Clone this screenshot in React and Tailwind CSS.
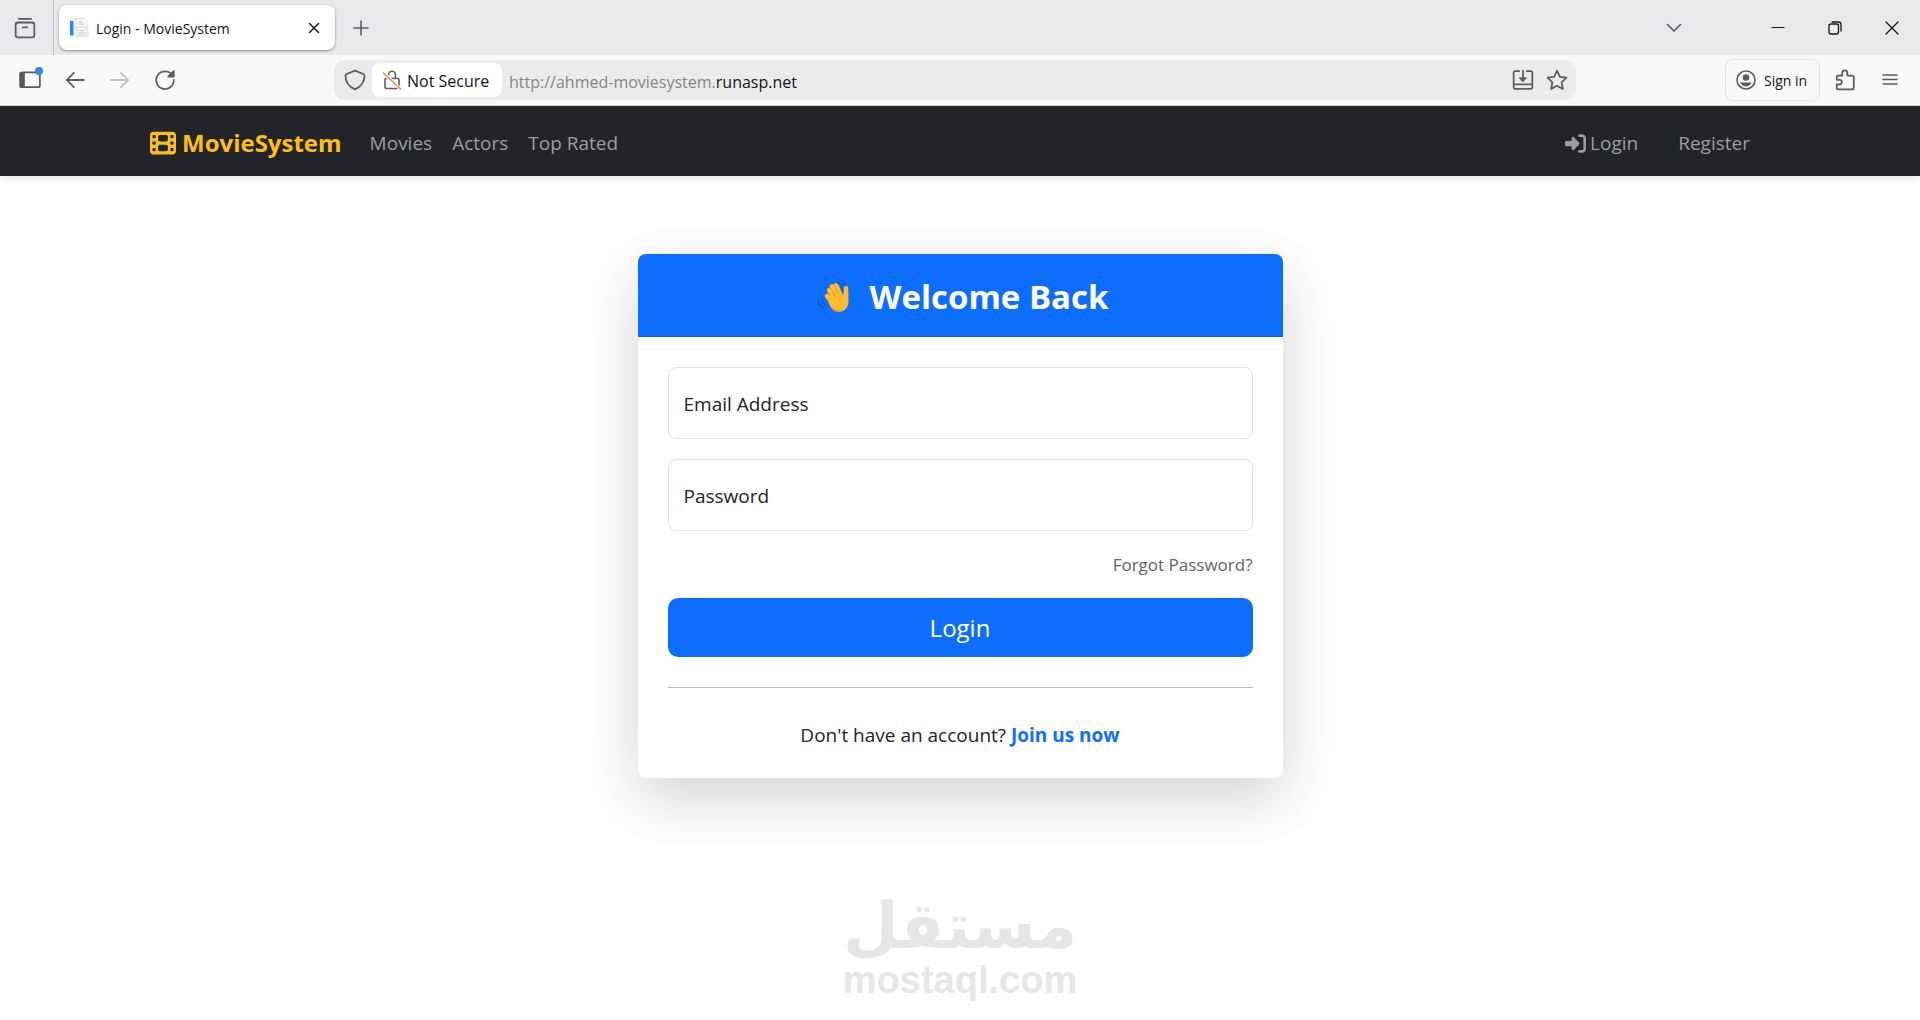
import React, { useState } from 'react';
import { FaFilm, FaRightToBracket } from 'react-icons/fa6';

const navLinks = ['Movies', 'Actors', 'Top Rated'];

const Icon = ({ size = 20, className = '', children }) => (
  <svg
    width={size}
    height={size}
    viewBox="0 0 20 20"
    fill="none"
    stroke="currentColor"
    strokeWidth="1.6"
    strokeLinecap="round"
    strokeLinejoin="round"
    aria-hidden="true"
    className={`shrink-0 ${className}`}
  >
    {children}
  </svg>
);

const IconButton = ({ label, className = '', children }) => (
  <button type="button" aria-label={label} className={`flex items-center justify-center ${className}`}>
    {children}
  </button>
);

const Favicon = () => (
  <svg width="20" height="20" viewBox="0 0 20 20" aria-hidden="true" className="shrink-0">
    <path d="M1 1h10v17H1z" fill="#f3f4f6" stroke="#d4d6da" strokeWidth=".6" />
    <path d="M1 3h3.500v14.500H1z" fill="#2f8be6" />
    <path d="M7 .5h8l3 3V10H7z" fill="#fafafa" stroke="#cfd1d5" strokeWidth=".7" />
    <path d="M8 9h8l3 3v7H8z" fill="#f5f5f6" stroke="#cfd1d5" strokeWidth=".7" />
    <path d="M9 4h5M9 6h7M10 12.500h5M10 15h7M10 17h7" stroke="#c3c5ca" strokeWidth=".8" />
  </svg>
);

const WavingHand = () => (
  <svg width="38" height="38" viewBox="0 0 36 36" role="img" aria-label="Waving hand" className="shrink-0">
    <g fill="none" strokeLinecap="round" strokeLinejoin="round">
      <g stroke="#f3a531" strokeWidth="4.600">
        <path d="M18 20l-5.500-8.500" />
        <path d="M20 17l-5-9" />
        <path d="M23 16l-4-9" />
        <path d="M15 23l-4.500-6" />
      </g>
      <g stroke="#fdc02f" strokeWidth="3.400">
        <path d="M18 20l-5.300-8.300" />
        <path d="M20.500 17l-5-8.800" />
        <path d="M23.500 16l-4.200-8.500" />
        <path d="M15.500 23l-4.500-5.700" />
      </g>
    </g>
    <path
      d="M12 19c3-5 9-7 12.500-3l1.500-1.500c.8-1.500.1-4 .3-5.500.3-2.200 3.700-2.200 4.100.2.500 3.500.2 8 .4 11.300.4 6.500-3 11-8 11.500-4.800.5-8.300-3-10.800-8z"
      fill="#fcbc2e"
    />
    <path d="M13 26c3 4 8 6 13 3.500-1.500 2-4 3-6.500 2.500-3-.7-5-3-6.500-6z" fill="#ee8f3e" />
    <path d="M25.500 15.500c-2 1-3.300 3-3.200 5M16 13.500l2.800 4.300M18.600 10.500l2.400 4.700" fill="none" stroke="#ee9b2c" strokeLinecap="round" />
    <g fill="none" stroke="#1550a8" strokeWidth="1" strokeLinecap="round">
      <path d="M20.500 4.500c2.300.3 3.800 2 4.300 4.500M22.500 1.500c3 .6 4.600 2.900 5 6" />
      <path d="M5.500 19.500c.2 3 1.400 5 3.800 6.200M2 21c.2 3.400 1.900 5.700 4.700 6.800" />
    </g>
  </svg>
);

const TabStrip = () => (
  <div className="flex h-[55px] items-center bg-[#e9e8ed] text-[#5b5b66]">
    <div className="flex h-full w-[54px] items-center border-r border-[#bdbcc3] pl-[14px]">
      <IconButton label="Recent tabs">
        <Icon size={22}>
          <rect x="1.500" y="5" width="17" height="13.500" rx="2.200" />
          <path d="M4.500 1.800h11M8 9.500h4" />
        </Icon>
      </IconButton>
    </div>
    <div className="ml-[5px] flex h-[45px] w-[276px] items-center rounded-[8px] bg-white pr-3 pl-[10px] shadow-[0_1px_3px_rgba(0,0,0,0.4)]">
      <Favicon />
      <span className="ml-[7px] flex-1 truncate pt-[2px] text-[14px] text-[#15141a]">Login - MovieSystem</span>
      <IconButton label="Close tab" className="size-[18px] text-[#15141a]">
        <Icon size={18}>
          <path d="M5 5l10 10M15 5L5 15" />
        </Icon>
      </IconButton>
    </div>
    <IconButton label="New tab" className="ml-4 size-5">
      <Icon>
        <path d="M10 3v14M3 10h14" />
      </Icon>
    </IconButton>
    <div className="ml-auto flex items-center text-[#15141a]">
      <IconButton label="List all tabs" className="mr-[52px] w-[46px] text-[#5b5b66]">
        <Icon>
          <path d="M3.500 6.500L10 13l6.500-6.500" />
        </Icon>
      </IconButton>
      <IconButton label="Minimize" className="h-10 w-[57px]">
        <Icon>
          <path d="M4 9.500h12" strokeWidth="1.200" />
        </Icon>
      </IconButton>
      <IconButton label="Restore" className="h-10 w-[57px]">
        <Icon>
          <rect x="4" y="6" width="9.500" height="10" rx="2" strokeWidth="1.300" />
          <path d="M7 4h6.500a2.500 2.500 0 0 1 2.500 2.500V13" strokeWidth="1.300" />
        </Icon>
      </IconButton>
      <IconButton label="Close" className="h-10 w-[57px]">
        <Icon>
          <path d="M4 4l12 12M16 4L4 16" strokeWidth="1.300" />
        </Icon>
      </IconButton>
    </div>
  </div>
);

const AddressBar = () => (
  <div className="flex h-10 flex-1 items-center rounded-[10px] bg-[#ebebec] pr-2 pl-[10px] text-[#5b5b66]">
    <IconButton label="Tracking protection" className="size-[22px]">
      <Icon size={22}>
        <path d="M10 1.500l7.500 3c.9.400 1.200 1 1.200 1.800-.2 5-3.200 9.700-8.700 12.200C4.500 16 1.500 11.300 1.300 6.300c0-.8.300-1.400 1.200-1.800z" />
      </Icon>
    </IconButton>
    <button type="button" className="ml-[6px] flex h-[34px] w-[130px] shrink-0 items-center rounded-[8px] bg-white pl-[10px] text-[16px]">
      <Icon size={20}>
        <path d="M6.500 8.500V4.800a3.500 3.500 0 0 1 7 0v3.700M4.500 8.500h11A1.500 1.500 0 0 1 17 10v7a1.500 1.500 0 0 1-1.500 1.500h-11A1.500 1.500 0 0 1 3 17v-7a1.500 1.500 0 0 1 1.500-1.500" />
        <path d="M1.500 3l17 16" stroke="#fff" strokeWidth="3.500" />
        <path d="M1.500 3l17 16" stroke="#e78a35" strokeWidth="1.500" />
      </Icon>
      <span className="ml-[5px] pt-[2px] whitespace-nowrap text-[#15141a]">Not Secure</span>
    </button>
    <div className="relative ml-[7px] flex h-full flex-1 items-center">
      <label htmlFor="url" className="pt-[3px] text-[16px] text-[#85858c]">
        http://ahmed-moviesystem.<span className="text-[#15141a]">runasp.net</span>
      </label>
      <input id="url" type="text" className="absolute inset-0 bg-transparent outline-none" />
    </div>
    <IconButton label="Install app" className="mr-3 size-[22px]">
      <Icon size={22}>
        <path d="M6.500 2H3a1.500 1.500 0 0 0-1.500 1.500v13A1.500 1.500 0 0 0 3 18h14a1.500 1.500 0 0 0 1.500-1.500v-13A1.500 1.500 0 0 0 17 2h-3.500M1.500 14h17M10 1.500V9" />
        <path d="M6.800 8h6.400L10 11.500z" fill="currentColor" strokeWidth=".8" />
      </Icon>
    </IconButton>
    <IconButton label="Bookmark" className="size-[22px]">
      <Icon size={22}>
        <path d="M10 1.500l2.600 5.600 6 .8-4.400 4.200 1.100 6.100L10 15.300l-5.300 2.900 1.100-6.100L1.400 7.900l6-.8z" />
      </Icon>
    </IconButton>
  </div>
);

const Toolbar = () => (
  <div className="flex h-[51px] items-center border-b border-[#d5d5da] bg-[#f9f9fb] text-[#5b5b66]">
    <div className="flex w-[334px] shrink-0 items-center gap-[23px] pl-[19px]">
      <IconButton label="Sidebar" className="relative size-[22px]">
        <Icon size={22}>
          <rect x="1" y="3" width="18" height="13.500" rx="1.800" />
          <path d="M2 4h2.500v12H2z" fill="currentColor" />
        </Icon>
        <span className="absolute -top-[2px] -right-[2px] size-2 rounded-full bg-[#2f8be6]" />
      </IconButton>
      <IconButton label="Back" className="size-[22px]">
        <Icon size={22}>
          <path d="M18 10H2.500M9 3.500L2.500 10 9 16.500" />
        </Icon>
      </IconButton>
      <IconButton label="Forward" className="size-[22px] text-[#bdbdc2]">
        <Icon size={22}>
          <path d="M2 10h15.500M11 3.500l6.500 6.500-6.500 6.500" />
        </Icon>
      </IconButton>
      <IconButton label="Reload" className="size-[22px]">
        <Icon size={22}>
          <path d="M16.500 5.500A8 8 0 1 0 18 10" />
          <path d="M18 2v5h-5z" fill="currentColor" />
        </Icon>
      </IconButton>
    </div>
    <AddressBar />
    <div className="flex w-[344px] shrink-0 items-center justify-end pr-5">
      <button type="button" className="flex h-[42px] w-[95px] items-center rounded-[8px] border border-[#e2e2e6] pl-[10px] text-[14px] text-[#15141a]">
        <Icon className="text-[#5b5b66]">
          <circle cx="10" cy="10" r="9" />
          <circle cx="10" cy="7.500" r="2.500" fill="currentColor" />
          <path d="M5 13h10c-1 2-3 3-5 3s-4-1-5-3z" fill="currentColor" strokeWidth="1" />
        </Icon>
        <span className="ml-2 whitespace-nowrap">Sign in</span>
      </button>
      <IconButton label="Extensions" className="ml-[14px] size-[22px]">
        <Icon size={22}>
          <path d="M7.500 6V3.500a2.300 2.300 0 0 1 4.600 0V6h4.400a1.500 1.500 0 0 1 1.500 1.500V17a1.500 1.500 0 0 1-1.500 1.500H4A1.500 1.500 0 0 1 2.500 17v-3H5a2 2 0 0 0 0-4.200H2.500V7.500A1.500 1.500 0 0 1 4 6z" />
        </Icon>
      </IconButton>
      <IconButton label="Menu" className="ml-[24px] size-5">
        <Icon>
          <path d="M3 5h14M3 9.500h14M3 14h14" />
        </Icon>
      </IconButton>
    </div>
  </div>
);

const Navbar = () => (
  <nav className="bg-[#212529] shadow-[0_3px_6px_rgba(0,0,0,0.08)]">
    <div className="mx-auto flex h-[70px] max-w-[1650px] items-center px-[15px] pt-1 text-[19px] text-[#9b9d9f]">
      <a href="#" className="mr-[18px] flex items-center gap-[6px] text-[24px] font-bold text-[#fdbe1a]">
        <FaFilm className="size-[26px]" />
        MovieSystem
      </a>
      <div className="flex">
        {navLinks.map((link) => (
          <a key={link} href="#" className="px-[10px]">
            {link}
          </a>
        ))}
      </div>
      <div className="ml-auto flex">
        <a href="#" className="flex items-center gap-1 px-5">
          <FaRightToBracket className="size-[21px]" />
          Login
        </a>
        <a href="#" className="px-5">
          Register
        </a>
      </div>
    </div>
  </nav>
);

const Field = ({ id, type, label }) => {
  const [value, setValue] = useState('');

  return (
    <div className="relative mb-5">
      <input
        id={id}
        type={type}
        value={value}
        onChange={(e) => setValue(e.target.value)}
        className="block h-[72px] w-full rounded-[8px] border border-[#dee2e6] bg-white px-[15px] pt-6 text-[19px] outline-none focus:border-[#86b7fe]"
      />
      <label
        htmlFor={id}
        className={
          value
            ? 'pointer-events-none absolute top-2 left-4 text-[14px] text-[#6c757d]'
            : 'pointer-events-none absolute inset-y-0 left-4 flex items-center pt-[2px] text-[19px]'
        }
      >
        {label}
      </label>
    </div>
  );
};

const LoginCard = () => (
  <section className="w-full max-w-[645px] rounded-[8px] bg-white shadow-[0_20px_60px_rgba(0,0,0,0.175)]">
    <header className="flex h-[83px] items-center justify-center gap-4 rounded-t-[8px] border-b border-[#0b5ed7] bg-[#0d6efd] pt-[3px] pl-1 text-white">
      <WavingHand />
      <h1 className="text-[33px] font-bold">Welcome Back</h1>
    </header>
    <form className="px-[30px] pt-[30px] pb-7" onSubmit={(e) => e.preventDefault()}>
      <Field id="email" type="email" label="Email Address" />
      <Field id="password" type="password" label="Password" />
      <div className="mb-5 flex justify-end">
        <a href="#" className="text-[17px] leading-[27px] text-[#5c636a]">
          Forgot Password?
        </a>
      </div>
      <button type="submit" className="h-[59px] w-full rounded-[10px] bg-[#0d6efd] text-[24px] text-white">
        Login
      </button>
      <hr className="mt-[30px] mb-8 border-[#bcbec0]" />
      <p className="text-center text-[19px] leading-[30px]">
        Don't have an account?{' '}
        <a href="#" className="font-bold text-[#0d6efd]">
          Join us now
        </a>
      </p>
    </form>
  </section>
);

const Brandmark = () => (
  <div className="flex flex-col items-center font-['Liberation_Sans',sans-serif] font-bold text-[#e6e6e6]">
    <span lang="ar" dir="rtl" className="font-['DejaVu_Sans',sans-serif] text-[64px] leading-[68px]">
      مستقل
    </span>
    <span className="text-[38px] leading-10">mostaql.com</span>
  </div>
);

const App = () => {
  return (
    <div className="flex min-h-screen flex-col bg-white font-['Open_Sans','Noto_Sans',sans-serif] text-[#212529]">
      <TabStrip />
      <Toolbar />
      <Navbar />
      <main className="flex flex-1 flex-col items-center pt-[78px]">
        <LoginCard />
        <footer className="mt-auto pb-5">
          <Brandmark />
        </footer>
      </main>
    </div>
  );
};

export default App;
